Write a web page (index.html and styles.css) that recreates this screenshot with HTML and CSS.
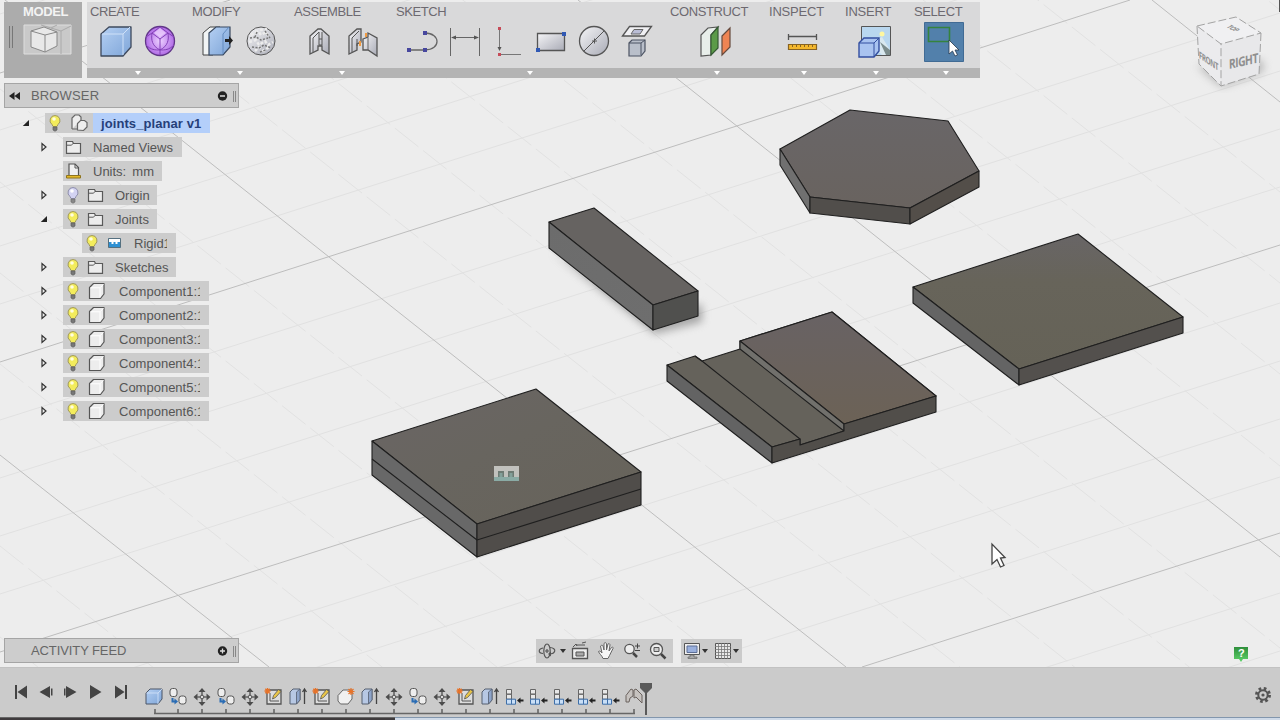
FILE: index.html
```html
<!DOCTYPE html>
<html lang="en">
<head>
<meta charset="utf-8">
<title>joints_planar v1</title>
<link rel="stylesheet" href="styles.css">
</head>
<body>
<svg class="defs" width="0" height="0" aria-hidden="true">
  <defs>
    <linearGradient id="blue" x1="0" y1="0" x2="1" y2="1"><stop offset="0" stop-color="#b5d0f3"/><stop offset="1" stop-color="#7ea5d8"/></linearGradient>
    <linearGradient id="steel" x1="0" y1="0" x2="1" y2="1"><stop offset="0" stop-color="#f5f5f7"/><stop offset="1" stop-color="#a9abb6"/></linearGradient>
    <radialGradient id="violet"><stop offset="0" stop-color="#ecd0ff"/><stop offset="1" stop-color="#b06ae6"/></radialGradient>
    <linearGradient id="green" x1="0" y1="0" x2="0" y2="1"><stop offset="0" stop-color="#2f8f3c"/><stop offset="1" stop-color="#5fd46a"/></linearGradient>
    <linearGradient id="top1" x1="0" y1="0" x2="1" y2="1"><stop offset="0" stop-color="#6a6565"/><stop offset=".45" stop-color="#68655f"/><stop offset="1" stop-color="#67635a"/></linearGradient>
    <linearGradient id="top2" x1="0" y1="0" x2="0" y2="1"><stop offset="0" stop-color="#696668"/><stop offset="1" stop-color="#69635f"/></linearGradient>
    <linearGradient id="top3" x1="0" y1="0" x2="0" y2="1"><stop offset="0" stop-color="#686566"/><stop offset=".35" stop-color="#67645a"/><stop offset="1" stop-color="#656257"/></linearGradient>
    <linearGradient id="top4" x1="0" y1="0" x2="0" y2="1"><stop offset="0" stop-color="#686264"/><stop offset="1" stop-color="#6c6256"/></linearGradient>
    <linearGradient id="left" x1="0" y1="0" x2="1" y2="1"><stop offset="0" stop-color="#6c6c6c"/><stop offset="1" stop-color="#6e6e6e"/></linearGradient>
    <filter id="soft" x="-20%" y="-20%" width="140%" height="140%"><feGaussianBlur stdDeviation="4"/></filter>

    <symbol id="bulb" viewBox="0 0 14 18"><path d="M7 1.5a5 5 0 0 0-3 9l1 2h4l1-2a5 5 0 0 0-3-9z" fill="#f3ec5c" stroke="#a19a5e"/><circle cx="6" cy="5" r="1.8" fill="#fffde0"/><path d="M5 13h4v3l-2 1.2L5 16z" fill="#777" stroke="#606060" stroke-width=".7"/></symbol>
    <symbol id="bulb-off" viewBox="0 0 14 18"><path d="M7 1.5a5 5 0 0 0-3 9l1 2h4l1-2a5 5 0 0 0-3-9z" fill="#d3d3f2" stroke="#8f8fab"/><circle cx="6" cy="5" r="1.8" fill="#fff"/><path d="M5 13h4v3l-2 1.2L5 16z" fill="#888" stroke="#707070" stroke-width=".7"/></symbol>
    <symbol id="folder" viewBox="0 0 17 15"><path d="M1.5 13.3V1.5h6l1 2h7v9.8z" fill="#ececec" stroke="#5a5a5a" stroke-width="1.2"/><path d="M1.5 5.2h4.700l2-1.7" fill="none" stroke="#5a5a5a"/></symbol>
    <symbol id="body" viewBox="0 0 18 18"><path d="M1.500 5.500L5.500 1.500h10.500v10.500l-3.500 4.500H1.500z" fill="#ededed" stroke="#555" stroke-width="1.200" stroke-linejoin="round"/><path d="M2.500 5.800h9.500v9.500M12 5.800l3.500-3.500" stroke="#fff" fill="none"/></symbol>
    <symbol id="closed" viewBox="0 0 8 10"><path d="M2 1.500v7L6 5z" fill="#eee" stroke="#333" stroke-width="1.200"/></symbol>
    <symbol id="open" viewBox="0 0 8 8"><path d="M7 1v6H.8z" fill="#222"/></symbol>

    <symbol id="t-box" viewBox="0 0 24 22"><path d="M4 7l4-4h12v10l-4 5H4z" fill="url(#blue)" stroke="#4b5566" stroke-linejoin="round"/><path d="M4.500 7h11.500v11M16 7l4-4" stroke="#d5e5fa" stroke-width=".8" fill="none"/></symbol>
    <symbol id="t-pair" viewBox="0 0 24 22"><rect x="4" y="2.500" width="7" height="8" rx="2.500" fill="#eee" stroke="#555"/><rect x="13" y="10" width="7" height="8" rx="2.500" fill="#eee" stroke="#555"/><path d="M6.500 12v3.500H9" stroke="#2a6cb4" stroke-width="2" fill="none"/><path d="M8.500 12.500v6l3.500-3z" fill="#2a6cb4"/></symbol>
    <symbol id="t-move" viewBox="0 0 24 22"><path d="M12 2l3.500 4h-7zM12 20l3.500-4h-7zM3.500 11l4-3.500v7zM20.500 11l-4-3.500v7z" fill="#4c4c4c"/><path d="M12 6v10M7 11h10" stroke="#666" stroke-width="1.600"/><circle cx="12" cy="11" r="1.800" fill="#ddd" stroke="#555"/></symbol>
    <symbol id="t-sketch" viewBox="0 0 24 22"><path d="M5 4h14v14H5z" fill="#ddd" stroke="#555" stroke-width="1.300"/><path d="M8 7v8h9" stroke="#555" fill="none"/><path d="M10.500 13l1-3.500 5-6 2.500 2-5.500 6z" fill="#e9c547" stroke="#555" stroke-width=".8"/><path d="M5.500 2v6M2.500 5h6M3.300 2.800l4.400 4.400M7.700 2.800L3.300 7.200" stroke="#e6732a" stroke-width="1.300"/></symbol>
    <symbol id="t-extrude" viewBox="0 0 24 22"><path d="M4 6l3-3h7v11l-3.500 4H4z" fill="#b7c8e4" stroke="#566071"/><path d="M10.500 6v12l3.500-4V3z" fill="#8ea5cb" stroke="#566071" stroke-width=".8"/><path d="M18.500 18V4M16.500 6l2-3 2 3" stroke="#444" stroke-width="1.300" fill="none"/></symbol>
    <symbol id="t-new" viewBox="0 0 24 22"><path d="M4 9.500l5-5.500h9v9l-4 5H6.500L4 15z" fill="#f0f0f0" stroke="#666"/><path d="M17 2v7M13.500 5.500h7M14.500 3l5 5M19.500 3l-5 5" stroke="#e6732a" stroke-width="1.200"/></symbol>
    <symbol id="t-origin" viewBox="0 0 24 22"><path d="M4.500 3.500h5v4.700h-5zM4.500 8.200h5v5h-5z" fill="#e8e8e8" stroke="#666"/><path d="M4.500 13.200h5v5h-5zM9.500 13.200h4v5h-4z" fill="#c9dff7" stroke="#3f6fa8"/><path d="M15 14.500l3.500-3v2h3v2h-3v2z" fill="#222"/></symbol>
    <symbol id="t-joint" viewBox="0 0 24 22"><path d="M4 16V9.500l5-6.500 2 1v6l-3 2-1 4z" fill="#c6c2bf" stroke="#6a625e"/><path d="M12 4l2-1 6 6v8l-6-6-2 1z" fill="#c6c2bf" stroke="#6a625e"/></symbol>
  </defs>
</svg>

<main class="app">
  <section class="viewport">
    <svg class="canvas" viewBox="0 0 1280 667" width="1280" height="667">
      <g class="minor">
        <path d="M0 14l1280-407M0 130l1280-407M0 188l1280-407M0 246l1280-407M0 304l1280-407M0 420l1280-407M0 478l1280-407M0 536l1280-407M0 594l1280-407M0 710l1280-407M0 768l1280-407M0 826l1280-407M0 884l1280-407M0 1000l1280-407M0 1058l1280-407"/>
        <path class="dash" d="M0 637l1280 1015M0 546l1280 1015M0 364l1280 1015M0 273l1280 1015M0 182l1280 1015M0 89l1280 1015M0-94l1280 1015M0-185l1280 1015M0-276l1280 1015M0-367l1280 1015M0-549l1280 1015M0-641l1280 1015M0-732l1280 1015M0-823l1280 1015M0-1005l1280 1015"/>
      </g>
      <g class="major">
        <path d="M0 73L230 0M0 362L1130 0M0 652L1280 245M862 667L1280 533"/>
        <path d="M0 455L269 667M0-4L846 667M578 0L1280 557M1152 0L1280 102"/>
      </g>

      <path d="M552 252L655 334L702 322V304L655 314Z" fill="#777" opacity=".6" filter="url(#soft)"/>
      <g class="solid">
        <path d="M549 222L594 208L698 291L653 305Z" fill="#666361"/>
        <path d="M549 222L653 305V330L549 248Z" fill="url(#left)"/>
        <path d="M653 305L698 291V316L653 330Z" fill="#50504e"/>

        <path d="M780 149L850 110L948 121L979 171L910 208L810 197Z" fill="url(#top2)"/>
        <path d="M780 149L810 197V213L780 165Z" fill="#707070"/>
        <path d="M810 197L910 208V224L810 213Z" fill="#514e4b"/>
        <path d="M910 208L979 171V187L910 224Z" fill="#534e49"/>

        <path d="M913 287L1078 234L1183 317L1019 369Z" fill="url(#top3)"/>
        <path d="M913 287L1019 369V385L913 303Z" fill="#646464"/>
        <path d="M1019 369L1183 317V333L1019 385Z" fill="#53504d"/>

        <path d="M667 365L695 356L702 361L740 349V341L832 312L936 396L844 424V431L800 445V439L772 447Z" fill="#65625b"/>
        <path d="M740 341L832 312L936 396L844 424Z" fill="url(#top4)"/>
        <path d="M740 341L844 424V431L740 349Z" fill="#71706c"/>
        <path d="M667 365L772 447V463L667 381Z" fill="#636363"/>
        <path d="M772 447L800 439V445L844 431V424L936 396V412L772 463Z" fill="#514e4a"/>
        <path d="M695 356L702 361L800 439" fill="none"/>

        <path d="M372 441L536 389L641 472L477 524Z" fill="url(#top1)"/>
        <path d="M372 441L477 524V557L372 475Z" fill="#686868"/>
        <path d="M477 524L641 472V505L477 557Z" fill="#504d4a"/>
        <path d="M372 459L477 540L641 489" fill="none"/>
      </g>
      <g>
        <path d="M494 466h25v15h-25z" fill="#c1c1bd"/><path d="M494 477h25v4h-25z" fill="#8aaba5"/><path d="M498 471h6v6h-6zM508 471h6v6h-6z" fill="#6d7b74"/><path d="M499.500 473h3v4h-3zM509.500 473h3v4h-3z" fill="#83a09a"/>
      </g>

      <path d="M1197 66l24 21 40-14 4-6-5-8z" fill="#888" opacity=".5" filter="url(#soft)"/>
      <path d="M1197 26l39-9 25 16-40 11z" fill="#f0f0f2"/>
      <path d="M1197 26l24 18v42l-22-22z" fill="#ebebed"/>
      <path d="M1221 44l40-11-2 41-38 12z" fill="#e8e8ea"/>
      <path class="cube-edge" d="M1197 26l39-9 25 16-40 11zM1197 26l2 38 22 22V44M1261 33l-2 41-38 12"/>
      <text class="cube-text" transform="matrix(.86 -.19 .02 1.1 1229 69)">RIGHT</text>
      <text class="cube-text small" transform="matrix(.7 .46 .04 1.1 1199 58)">FRONT</text>
      <text class="cube-text small" transform="matrix(.55 .3 -.8 .35 1226 27)">TOP</text>
      <path d="M992 544v20l5-4.500 3.500 7.500 3.500-1.500-3.500-7.500 4.500-.5z" fill="#fff" stroke="#444" stroke-width="1.300"/>
      <path d="M1234 647h14v12h-5l-2 3-2-3h-5z" fill="url(#green)"/><text class="help" x="1238" y="657">?</text>
      <path d="M1279 0h1v12h-1z" fill="#555"/>
    </svg>

    <nav class="toolbar">
      <div class="mode"><h2>MODEL</h2>
        <svg viewBox="4 20 78 58" width="78" height="58"><path d="M9.500 26v22M12.500 26v22" stroke="#777"/><path d="M24 25h47v29H24z" fill="#c9c9c9" stroke="#dedede"/><path d="M41 25l20 6v23M61 31l10-5M51 28l6-3" stroke="#aaa" fill="none"/><path d="M31 31l13-4 13 5v14l-12 6-14-5z" fill="#e8e8e8" stroke="#888"/><path d="M31 31l14 4 12-3M45 35v17" stroke="#888" fill="none"/></svg>
      </div>
      <div class="groups">
        <div class="group w102"><h2>CREATE</h2>
          <svg viewBox="87 20 102 48" width="102" height="48"><path d="M101 34l8-7h22v20l-8 9h-22z" fill="url(#blue)" stroke="#3e495c" stroke-linejoin="round" stroke-width="1.300"/><path d="M102 34h21v21M123 34l7-7" stroke="#cfe1f8" fill="none"/><circle cx="160" cy="41" r="14.500" fill="url(#violet)" stroke="#613688" stroke-width="1.300"/><path d="M160 27l8 6-8 6-8-6zM152 33c-1 7 0 13 8 17 8-4 9-10 8-17M160 39v16M146 37l6-4M168 33l6 4M146 45c5 5 9 5 14 5s9 0 14-5" fill="none" stroke="#8340b8" stroke-width="1"/><path d="M160 28l6 5-6 4-6-4z" fill="#f0d5ff" opacity=".7"/></svg>
        </div>
        <div class="group w102"><h2>MODIFY</h2>
          <svg viewBox="189 20 102 48" width="102" height="48"><path d="M203 33l7-6h10l-7 6v22h-10z" fill="#f1f4f5" stroke="#444"/><path d="M209 33l7-6h14v20l-7 8h-14z" fill="url(#blue)" stroke="#394960" stroke-width="1.200"/><path d="M223 34v20M223 34l6-7" stroke="#638bc0"/><path d="M225 39h4v-3l4 4.500-4 4.500v-3h-4z" fill="#222"/><circle cx="261" cy="41" r="14" fill="url(#steel)" stroke="#555"/><path d="M251 35l7-4 3 4 5-3 3 5M249 42l7-2 3 5 6-4 3 4 5-3M255 51l4-4 5 4 6-5M260 30l7-1" stroke="#ececec" stroke-width="2.500" fill="none" stroke-dasharray="3 2"/><path d="M250 38l6-1 5 3 7-2M252 47l7 1 5-3 7 3M265 31l5 7M257 32l-2 5M260 52l6-2" stroke="#777" stroke-dasharray="2 1.500" stroke-width="1.500" fill="none"/></svg>
        </div>
        <div class="group w102"><h2>ASSEMBLE</h2>
          <svg viewBox="291 20 102 48" width="102" height="48"><path d="M310 54V36l8-7h3l8 7v18l-7-4v-4h-4v4z" fill="url(#steel)" stroke="#555" stroke-width="1.300"/><path d="M313 52V38l6-6v13h3V32M322 39h-3" fill="none" stroke="#555"/><path d="M349 54V36l8-7h4v13l-4 2v6z" fill="url(#steel)" stroke="#555" stroke-width="1.300"/><path d="M352 52V38l7-7M357 39v7" fill="none" stroke="#555"/><path d="M360 46v-5M366 33v4" stroke="#ef9a42" stroke-width="2"/><path d="M363 39l5-2v-4l9 5v18l-9-6h-5z" fill="url(#steel)" stroke="#555" stroke-width="1.300"/><path d="M368 38v12" stroke="#666"/></svg>
        </div>
        <div class="group w274"><h2>SKETCH</h2>
          <svg viewBox="393 20 274 48" width="274" height="48"><path d="M409 50h16c16 0 16-17 0-17" stroke="#666" stroke-width="1.300" fill="none"/><path d="M407 48h4v4h-4zM423 48h4v4h-4zM423 31h4v4h-4z" fill="#47479e"/><path d="M450.500 28v28M479.500 28v28M452 37.500h26" stroke="#666"/><path d="M451 37.500l5-2v4zM479 37.500l-5-2v4z" fill="#555"/><path d="M499.500 30v20M499 54.500h22" stroke="#777"/><path d="M499.500 51l-2-4h4z" fill="#555"/><path d="M498 27h3v3h-3zM498 53h3v3h-3z" fill="#c64b58"/><path d="M537.500 33.500h27v17h-27z" fill="url(#steel)" stroke="#555" stroke-width="1.300"/><path d="M536 48h4v4h-4zM562 32h4v4h-4z" fill="#3159b4"/><circle cx="594" cy="41" r="14.500" fill="url(#steel)" stroke="#555" stroke-width="1.300"/><path d="M584 51l20-20M592 41h5M594.500 38.500v5" stroke="#555" fill="none"/><path d="M622.500 36l7-9.500h22l-7 9.500z" fill="#f0f0f3" stroke="#555" stroke-width="1.300"/><path d="M631 34l3-4.500h9l-3 4.500z" fill="#babdd5" stroke="#666"/><path d="M629 43l3-3h13v11l-4 5h-12z" fill="#b9bfca" stroke="#4b5262" stroke-width="1.200"/><path d="M629 43h12v12M641 43l4-3" fill="none" stroke="#4b5262"/></svg>
        </div>
        <div class="group w100"><h2>CONSTRUCT</h2>
          <svg viewBox="667 20 100 48" width="100" height="48"><path d="M701 35l7-7 10-1-7 8v20l-10 1z" fill="#e8eeea" stroke="#555" stroke-width="1.200"/><path d="M711 35l7-8v21l-7 7z" fill="#5b9b48" stroke="#355a33" stroke-width="1.200"/><path d="M722 36l8-8v19l-8 8z" fill="#ee8453" stroke="#664a3d" stroke-width="1.200"/></svg>
        </div>
        <div class="group w74"><h2>INSPECT</h2>
          <svg viewBox="767 20 74 48" width="74" height="48"><path d="M789 36.500h27M788.500 34v6M816.500 34v6" stroke="#555" stroke-width="1.300"/><path d="M788.500 44.500h28v5h-28z" fill="#f3b72d" stroke="#886322" stroke-width="1.200"/><path d="M792.500 45v2M796.500 45v2M800.500 45v2M804.500 45v2M808.500 45v2M812.500 45v2" stroke="#886322"/></svg>
        </div>
        <div class="group w70"><h2>INSERT</h2>
          <svg viewBox="841 20 70 48" width="70" height="48"><path d="M861.500 26.500h29v29h-29z" fill="#b9d7ef" stroke="#555"/><path d="M862 38l10 4 10-5 8 13v5h-8l-10-10-10 3z" fill="#d9e8ef"/><path d="M880 42l10 8v5h-4z" fill="#7c8c8c"/><circle cx="882" cy="34" r="2.500" fill="#fff7a0"/><path d="M859 43l5-5h15v13l-5 6h-15z" fill="#a9c3f0" stroke="#334fa0" stroke-width="1.400"/><path d="M859 43h15v14M874 43l5-5" stroke="#334fa0" fill="none"/></svg>
        </div>
        <div class="group w69"><h2>SELECT</h2>
          <svg viewBox="911 20 69 48" width="69" height="48"><path d="M924.500 22.500h39v39h-39z" fill="#5280ab" stroke="#416b94"/><path d="M928.500 27.500h21v14h-21z" fill="none" stroke="#35833d" stroke-width="1.600"/><path d="M949 40v14l3.500-3 2.500 5 2.500-1-2.500-5h4z" fill="#fff" stroke="#26394e" stroke-width=".8"/></svg>
        </div>
      </div>
    </nav>

    <aside class="browser">
      <header class="panel-head">
        <svg viewBox="0 0 20 10" width="20" height="10"><path d="M4 5l5.500-4v8zM9.500 5L15 1v8z" fill="#222"/></svg>
        <h3>BROWSER</h3>
        <svg class="head-end" viewBox="0 0 24 22" width="24" height="22"><circle cx="8.500" cy="11" r="4.700" fill="#222"/><path d="M6 11h5" stroke="#ddd" stroke-width="1.500"/><path d="M19.500 6v11M21.500 6v11" stroke="#888"/></svg>
      </header>
      <ul class="tree">
        <li class="root"><svg class="arrow" width="8" height="8"><use href="#open"/></svg><div class="node"><svg class="bulb"><use href="#bulb"/></svg><svg class="parts" viewBox="0 0 18 18" width="18" height="18"><path d="M2 15V4l3-3h4l2 2v3M2 15h6" fill="#eee" stroke="#666" stroke-width="1.200"/><path d="M7.500 16V9.500l3-3h4l2.500 2V13l-3.500 3.500z" fill="#eee" stroke="#666" stroke-width="1.200"/></svg><span>joints_planar v1</span></div></li>
        <li class="n119"><svg class="arrow" width="8" height="10"><use href="#closed"/></svg><div class="node"><svg class="folder"><use href="#folder"/></svg><span>Named Views</span></div></li>
        <li class="n99"><i class="arrow"></i><div class="node"><svg class="page" viewBox="0 0 17 18" width="17" height="18"><path d="M4 13V2h6l3.500 3.500V13" fill="#f0f0f0" stroke="#555" stroke-width="1.200"/><path d="M10 2v4h3.500" stroke="#555" fill="none"/><path d="M1.500 13.500h14v2.500h-14z" fill="#e4b928" stroke="#8f741d"/></svg><span class="units">Units: mm</span></div></li>
        <li class="n94"><svg class="arrow" width="8" height="10"><use href="#closed"/></svg><div class="node"><svg class="bulb"><use href="#bulb-off"/></svg><svg class="folder"><use href="#folder"/></svg><span>Origin</span></div></li>
        <li class="n94"><svg class="arrow" width="8" height="8"><use href="#open"/></svg><div class="node"><svg class="bulb"><use href="#bulb"/></svg><svg class="folder"><use href="#folder"/></svg><span>Joints</span></div></li>
        <li class="rigid"><div class="node"><svg class="bulb"><use href="#bulb"/></svg><svg class="joint" viewBox="0 0 13 10" width="13" height="10"><path d="M.5.500h12v9H.5z" fill="#2f91d3" stroke="#557080"/><path d="M1 1h11v3H9.500v2h-2V4h-2v2h-2V4H1z" fill="#fff"/></svg><span class="clip">Rigid1</span></div></li>
        <li class="n113"><svg class="arrow" width="8" height="10"><use href="#closed"/></svg><div class="node"><svg class="bulb"><use href="#bulb"/></svg><svg class="folder"><use href="#folder"/></svg><span>Sketches</span></div></li>
        <li class="comp"><svg class="arrow" width="8" height="10"><use href="#closed"/></svg><div class="node"><svg class="bulb"><use href="#bulb"/></svg><svg class="body"><use href="#body"/></svg><span class="clip">Component1:1</span></div></li>
        <li class="comp"><svg class="arrow" width="8" height="10"><use href="#closed"/></svg><div class="node"><svg class="bulb"><use href="#bulb"/></svg><svg class="body"><use href="#body"/></svg><span class="clip">Component2:1</span></div></li>
        <li class="comp"><svg class="arrow" width="8" height="10"><use href="#closed"/></svg><div class="node"><svg class="bulb"><use href="#bulb"/></svg><svg class="body"><use href="#body"/></svg><span class="clip">Component3:1</span></div></li>
        <li class="comp"><svg class="arrow" width="8" height="10"><use href="#closed"/></svg><div class="node"><svg class="bulb"><use href="#bulb"/></svg><svg class="body"><use href="#body"/></svg><span class="clip">Component4:1</span></div></li>
        <li class="comp"><svg class="arrow" width="8" height="10"><use href="#closed"/></svg><div class="node"><svg class="bulb"><use href="#bulb"/></svg><svg class="body"><use href="#body"/></svg><span class="clip">Component5:1</span></div></li>
        <li class="comp"><svg class="arrow" width="8" height="10"><use href="#closed"/></svg><div class="node"><svg class="bulb"><use href="#bulb"/></svg><svg class="body"><use href="#body"/></svg><span class="clip">Component6:1</span></div></li>
      </ul>
    </aside>

    <section class="panel-head feed">
      <h3>ACTIVITY FEED</h3>
      <svg class="head-end" viewBox="0 0 24 22" width="24" height="22"><circle cx="8.500" cy="11" r="4.700" fill="#222"/><path d="M6 11h5M8.500 8.500v5" stroke="#ddd" stroke-width="1.300"/><path d="M19.500 6v11M21.500 6v11" stroke="#888"/></svg>
    </section>

    <div class="navbar">
      <svg viewBox="536 639 137 24" width="137" height="24"><ellipse cx="547" cy="651" rx="3.200" ry="7" fill="none" stroke="#555" stroke-width="1.200"/><path d="M543 648c-5 1-5 5 0 5.500M549 654c7 0 8-6 1-6.500M545 651h4M547 649v4" fill="none" stroke="#555" stroke-width="1.200"/><path d="M548 654l3-2.500v5z" fill="#555"/><path d="M560 649h6l-3 4z" fill="#333"/><path d="M572.500 648.500h15v10h-15z" fill="#eee" stroke="#555" stroke-width="1.300"/><path d="M576 652h8v4h-8z" fill="#aaa" stroke="#555"/><path d="M573 647l3-3 1 2M576 645h9M582 643l4-1" stroke="#555" fill="none"/><path d="M603 658.500c-1-3-4-5-4.500-7 1-1 2.500 0 3.500 1.500l-1.500-7c1-1 2-1 2.500 0l1 4v-6.500c1-1 2-1 2.500 0v6.500l1.500-6c1-1 2 0 2 1l-1 6 2.500-3.500c1-1 2 0 1.500 1l-3.500 7-1.500 3z" fill="#f6f6f6" stroke="#666"/><circle cx="629.500" cy="649" r="4.700" fill="#eee" stroke="#555" stroke-width="1.300"/><path d="M633 653l4 4" stroke="#444" stroke-width="2.500"/><path d="M635 646h5M637.500 643.500v5M635 650.500h5" stroke="#444"/><circle cx="656.500" cy="649.500" r="6" fill="#eee" stroke="#555" stroke-width="1.300"/><path d="M654 647.500h5v4h-5z" fill="#ccc" stroke="#555"/><path d="M661 654l4.500 4.500" stroke="#444" stroke-width="2.500"/></svg>
      <svg viewBox="681 639 61 24" width="61" height="24"><path d="M684.500 643.500h15v11h-15z" fill="#eee" stroke="#555"/><path d="M687 646h10v6.500h-10z" fill="#9ab0dd" stroke="#5d6f97"/><path d="M690 655h4v2h3v1.500h-9V657h2z" fill="#aaa" stroke="#666" stroke-width=".7"/><path d="M702 649h6l-3 4zM733 649h6l-3 4z" fill="#333"/><path d="M715.500 643.500h15v15h-15z" fill="#e8e8e8" stroke="#555"/><path d="M718.500 643v16M721.500 643v16M724.500 643v16M727.500 643v16M715 646.500h16M715 649.500h16M715 652.500h16M715 655.500h16" stroke="#777" stroke-width=".8"/></svg>
    </div>
  </section>

  <footer class="timeline">
    <svg class="playback" viewBox="0 667 142 50" width="142" height="50"><g fill="#444"><path d="M15 685h2v14h-2zM27 685.500v13l-9.500-6.500zM50 686v12l-10.500-6zM51 688.500h1.500v7H51zM66 686v12l10.500-6zM64 688.500h1.500v7H64zM90 685l11.500 7L90 699zM115 685.500v13l9.500-6.500zM125 685h2v14h-2z"/></g></svg>
    <div class="track">
      <div class="steps">
        <svg><use href="#t-box"/></svg><svg><use href="#t-pair"/></svg><svg><use href="#t-move"/></svg><svg><use href="#t-pair"/></svg><svg><use href="#t-move"/></svg><svg><use href="#t-sketch"/></svg><svg><use href="#t-extrude"/></svg><svg><use href="#t-sketch"/></svg><svg><use href="#t-new"/></svg><svg><use href="#t-extrude"/></svg><svg><use href="#t-move"/></svg><svg><use href="#t-pair"/></svg><svg><use href="#t-move"/></svg><svg><use href="#t-sketch"/></svg><svg><use href="#t-extrude"/></svg><svg><use href="#t-origin"/></svg><svg><use href="#t-origin"/></svg><svg><use href="#t-origin"/></svg><svg><use href="#t-origin"/></svg><svg><use href="#t-origin"/></svg><svg><use href="#t-joint"/></svg>
      </div>
      <svg class="rail" viewBox="142 708 504 9" width="504" height="9"><path d="M154 713.500h481M155 709v5M178 709v5M202 709v5M226 709v5M250 709v5M274 709v5M298 709v5M322 709v5M346 709v5M370 709v5M394 709v5M418 709v5M442 709v5M466 709v5M490 709v5M514 709v5M538 709v5M562 709v5M586 709v5M610 709v5M634 709v5" stroke="#666" stroke-width="1.600" fill="none"/></svg>
      <svg class="marker" viewBox="0 0 12 33" width="12" height="33"><path d="M0 0h12v5L7 10v22H5V10L0 5z" fill="#5a5a5a"/></svg>
    </div>
    <svg class="gear" viewBox="0 0 18 18" width="18" height="18"><circle cx="9" cy="9" r="6.500" fill="none" stroke="#555" stroke-width="3" stroke-dasharray="2.600 2.500"/><circle cx="9" cy="9" r="4.700" fill="none" stroke="#555" stroke-width="2"/><circle cx="9" cy="9" r="1.600" fill="#555"/></svg>
  </footer>
  <div class="edge"><div class="edge-dark"></div><div class="edge-light"></div></div>
</main>
</body>
</html>
```
FILE: styles.css
```css
* { box-sizing: border-box; }
body { margin: 0; font-family: "Liberation Sans", Arial, sans-serif; font-size: 13px; color: #555; overflow: hidden; }
h2, h3, ul { margin: 0; padding: 0; font-weight: normal; font-size: 13px; }
svg { display: block; flex: none; }
.defs { position: absolute; }
.app { width: 1280px; height: 720px; display: flex; flex-direction: column; }
.viewport { position: relative; height: 667px; background: #ededed; overflow: hidden; }
.canvas { display: block; }
.minor { stroke: #e1e1e1; fill: none; }
.minor .dash { stroke: #e2e2e2; stroke-dasharray: 30 6; }
.major { stroke: #bdbdbd; fill: none; }
.solid { stroke: #1f1f1f; stroke-linejoin: round; stroke-width: 1.1; }
.cube-edge { fill: none; stroke: #a3a3a3; stroke-dasharray: 8 3; }
.cube-text { font-family: "Open Sans", sans-serif; font-size: 12px; font-weight: bold; fill: #8f8f8f; letter-spacing: -.6px; }
.cube-text.small { font-size: 9px; }
.help { fill: #fff; font-size: 11px; font-weight: bold; }

.toolbar { position: absolute; left: 4px; top: 2px; height: 76px; display: flex; gap: 5px; }
.toolbar h2 { height: 18px; padding: 2px 0 0 3px; line-height: 15px; letter-spacing: -.4px; color: #6d6970; white-space: nowrap; }
.mode { width: 78px; background: #acacac; }
.toolbar .mode h2 { padding-left: 19px; font-weight: bold; color: #f3f3f3; letter-spacing: -.4px; }
.groups { display: flex; background: #d9d9da; }
.group { position: relative; border-bottom: 10px solid #b4b4b4; }
.group::after { content: ""; position: absolute; left: calc(50% - 3px); bottom: -7px; border: 3px solid transparent; border-top: 4px solid #fff; border-bottom: 0; }
.w102 { width: 102px; }
.w274 { width: 274px; }
.w100 { width: 100px; }
.w74 { width: 74px; }
.w70 { width: 70px; }
.w69 { width: 69px; }
.toolbar .w74 h2, .toolbar .w70 h2 { padding-left: 2px; letter-spacing: -.2px; }
.toolbar .w70 h2 { padding-left: 4px; }

.browser { position: absolute; left: 4px; top: 83px; width: 235px; }
.panel-head { width: 235px; height: 25px; display: flex; align-items: center; background: #cdcdcd; border: 1px solid #a5a5a5; }
.panel-head h3 { margin-left: 6px; color: #666; letter-spacing: .15px; }
.head-end { margin-left: auto; margin-right: 0; }
.feed { position: absolute; left: 4px; top: 638px; }
.panel-head.feed h3 { margin-left: 26px; letter-spacing: -.1px; }
.tree { list-style: none; padding-top: 3px; }
.tree li { height: 24px; display: flex; align-items: center; padding-left: 36px; }
.arrow { width: 8px; margin-right: 15px; }
.node { height: 20px; display: flex; align-items: center; background: #cccccc; padding-left: 3px; overflow: hidden; }
.node span { white-space: nowrap; line-height: 21px; }
.node .units { word-spacing: 2.5px; }
.bulb { width: 14px; height: 18px; }
.folder { width: 17px; height: 15px; margin-left: 7px; margin-right: 11px; }
.node > .folder:first-child { margin-left: -1px; }
.page { margin-right: 11px; margin-left: -1px; }
.body { width: 18px; height: 18px; margin: 0 13px 0 8px; }
.n119 .node { width: 119px; }
.n99 .node { width: 99px; }
.n94 .node { width: 94px; }
.n113 .node { width: 113px; }
.comp .node { width: 146px; }
.comp .clip { width: 81px; overflow: hidden; }
.tree .rigid { padding-left: 78px; }
.rigid .node { width: 94px; }
.rigid .joint { margin-left: 9px; }
.rigid .clip { width: 33px; overflow: hidden; margin-left: 13px; }
.tree .root { padding-left: 18px; }
.root .node { width: 165px; }
.root .parts { margin: 0 5px 0 8px; }
.root span { align-self: stretch; flex: 1; padding-left: 8px; background: #b4cffa; color: #263f79; font-weight: bold; letter-spacing: .08px; }

.navbar { position: absolute; left: 536px; top: 639px; display: flex; gap: 8px; }
.navbar svg { background: #cbcbcb; }

.timeline { height: 50px; display: flex; background: #cbcbcb; border-top: 1px solid #c2c2c2; }
.playback { margin-top: -1px; }
.track { position: relative; width: 510px; padding-top: 18px; }
.steps { display: flex; }
.steps svg { width: 24px; height: 22px; }
.marker { position: absolute; left: 498px; top: 15px; }
.gear { margin: 18px 8px 0 auto; }
.edge { height: 3px; display: flex; }
.edge-dark { width: 395px; background: #3f3b3d; border-top: 1px solid #666; }
.edge-light { flex: 1; background: #cfdae8; border-top: 1px solid #8296ad; }
```
